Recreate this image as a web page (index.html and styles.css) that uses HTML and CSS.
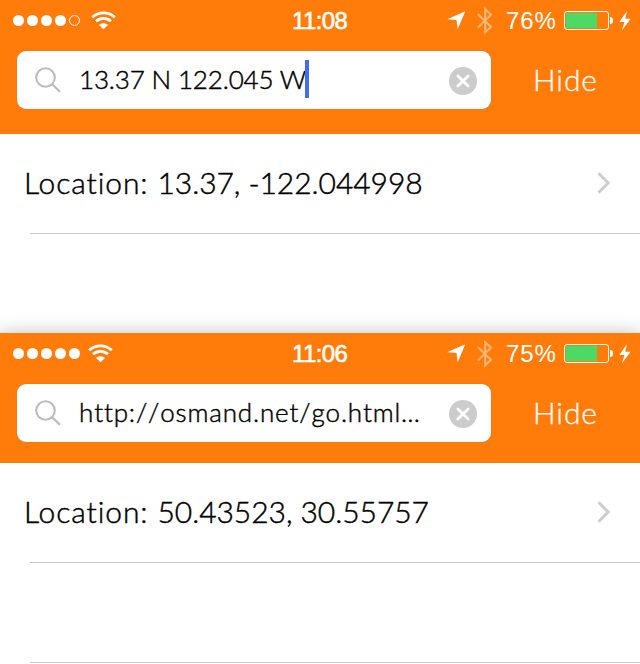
FILE: index.html
```
<!DOCTYPE html>
<html lang="en">
<head>
<meta charset="utf-8">
<title>Location search</title>
<link rel="stylesheet" href="styles.css">
</head>
<body>
<svg class="defs" width="0" height="0" aria-hidden="true">
  <symbol id="wifi" viewBox="0 0 25 19">
    <path d="M1.200 6.200C7.500 .3 17.500 .3 23.800 6.200M5 10.300c4.300-3.900 10.700-3.900 15 0" fill="none" stroke="#fff" stroke-width="2.700"/>
    <path d="M8 13.900c2.600-2.300 6.400-2.300 9 0L12.500 18.300z" fill="#fff"/>
  </symbol>
  <symbol id="arrow" viewBox="0 0 19 19"><path d="M18.300 .2L10.700 18.200L9.500 9.100L.2 8.200z" fill="#fff"/></symbol>
  <symbol id="bluetooth" viewBox="0 0 16 28"><path d="M1 7.200L14 19.800L8.200 25.300V2.200L14 7.800L1 20.600" fill="none" stroke="#ffb574" stroke-width="2.100"/></symbol>
  <symbol id="bolt" viewBox="0 0 12 20"><path d="M8 0L.3 11H5.500L2.800 19.600L11.700 7.800H6.300z" fill="#fff"/></symbol>
  <symbol id="search" viewBox="0 0 26 26"><circle cx="10.500" cy="10.500" r="9.300" fill="none" stroke="#bcbcbc" stroke-width="2.100"/><path d="M17.200 17.200L24.900 24.700" stroke="#bcbcbc" stroke-width="2.300"/></symbol>
  <symbol id="clear" viewBox="0 0 28 28"><circle cx="14" cy="14" r="14" fill="#ccc"/><path d="M8.900 8.900L19.100 19.100M19.100 8.900L8.900 19.100" stroke="#fff" stroke-width="2.800" stroke-linecap="round"/></symbol>
  <symbol id="chevron" viewBox="0 0 14 22"><path d="M1.500 1.200L11.200 11L1.500 20.800" fill="none" stroke="#cdcdcf" stroke-width="3"/></symbol>
</svg>

<section class="screen first">
  <header class="header">
    <div class="status">
      <div class="signal"><i></i><i></i><i></i><i></i><i class="off"></i></div>
      <svg class="wifi"><use href="#wifi"/></svg>
      <span class="time">11:08</span>
      <svg class="arrow"><use href="#arrow"/></svg>
      <svg class="bluetooth"><use href="#bluetooth"/></svg>
      <span class="percent">76%</span>
      <div class="battery"><b></b></div><div class="tip"></div>
      <svg class="bolt"><use href="#bolt"/></svg>
    </div>
    <div class="bar">
      <div class="field">
        <svg class="search"><use href="#search"/></svg>
        <span class="query coords">13.37 N 122.045 W</span><span class="caret"></span>
        <svg class="clear"><use href="#clear"/></svg>
      </div>
      <span class="hide">Hide</span>
    </div>
  </header>
  <div class="row"><span class="result"><span class="label">Location: </span>13.37, -122.044998</span><svg class="chevron"><use href="#chevron"/></svg></div>
</section>

<section class="screen second">
  <header class="header">
    <div class="status">
      <div class="signal"><i></i><i></i><i></i><i></i><i></i></div>
      <svg class="wifi"><use href="#wifi"/></svg>
      <span class="time">11:06</span>
      <svg class="arrow"><use href="#arrow"/></svg>
      <svg class="bluetooth"><use href="#bluetooth"/></svg>
      <span class="percent">75%</span>
      <div class="battery"><b></b></div><div class="tip"></div>
      <svg class="bolt"><use href="#bolt"/></svg>
    </div>
    <div class="bar">
      <div class="field">
        <svg class="search"><use href="#search"/></svg>
        <span class="query link">http://osmand.net/go.html<span class="dots">…</span></span>
        <svg class="clear"><use href="#clear"/></svg>
      </div>
      <span class="hide">Hide</span>
    </div>
  </header>
  <div class="row"><span class="result"><span class="label">Location: </span>50.43523, 30.55757</span><svg class="chevron"><use href="#chevron"/></svg></div>
  <div class="row"></div>
</section>
</body>
</html>
```
FILE: styles.css
```
* { box-sizing: border-box; }
body {
  margin: 0;
  width: 640px;
  height: 664px;
  overflow: hidden;
  background: #fff;
  color: #000;
  font-family: Lato, "Liberation Sans", sans-serif;
  font-weight: 300;
  font-variant-ligatures: none;
}
svg { display: block; flex: none; }
.defs { position: absolute; }
.first { height: 333px; }
.first .header { height: 134px; }
.second .header { height: 130px; box-shadow: 0 0 18px rgba(0, 0, 0, .24); clip-path: inset(-20px 0 0 0); }
.header { background: #ff7c0a; }

.status {
  display: grid;
  grid-template-columns: 78px 201px 155px 30px 29px 58px 45px 10px 12px;
  height: 41px;
  padding-left: 13px;
  align-items: center;
  color: #fff;
  white-space: nowrap;
}
.second .status { grid-template-columns: 75px 204px 155px 30px 29px 58px 45px 10px 12px; }
.signal { display: flex; gap: 3px; }
.signal i { width: 11px; height: 11px; border-radius: 50%; background: #fff; }
.signal .off { background: none; border: 1px solid #fff; }
.wifi { width: 25px; height: 19px; }
.time {
  font: 24px/28px "Liberation Sans", sans-serif;
  -webkit-text-stroke: .6px #fff;
  letter-spacing: -.6px;
  padding-top: 1px;
}
.arrow { width: 19px; height: 19px; }
.bluetooth { width: 16px; height: 28px; }
.percent { font: 24px/28px "Liberation Sans", sans-serif; letter-spacing: .9px; padding-top: 1px; }
.battery { width: 45px; height: 19px; border: 1px solid #fff; border-radius: 3px; padding: 1px; }
.battery b { display: block; width: 31px; height: 15px; background: #4cd964; }
.tip { width: 3px; height: 7px; margin-left: 1px; background: #fff; border-radius: 0 3px 3px 0; }
.bolt { width: 12px; height: 20px; }

.bar { display: flex; align-items: center; padding: 10px 0 0 17px; }
.field {
  display: flex;
  align-items: center;
  width: 474px;
  height: 58px;
  padding: 0 14px 0 18px;
  background: #fff;
  border-radius: 9px;
  box-shadow: 0 0 1px 0 #777;
}
.search { width: 26px; height: 26px; }
.query { margin: 0 0 2px 18px; font-size: 26px; line-height: 34px; white-space: nowrap; -webkit-text-stroke: .45px #000; }
.coords { width: 226px; letter-spacing: -.15px; }
.link { letter-spacing: .85px; font-kerning: none; }
.dots { letter-spacing: 0; }
.caret { width: 4px; height: 38px; margin-bottom: 2px; background: #446cf0; }
.clear { width: 28px; height: 28px; margin: 2px 0 0 auto; }
.hide { margin: 0 0 2px 42px; color: #fff; font-size: 30px; letter-spacing: .9px; line-height: 36px; -webkit-text-stroke: .3px #fff; }

.row {
  display: flex;
  justify-content: space-between;
  align-items: center;
  height: 100px;
  padding: 0 29px 2px 24px;
  background: linear-gradient(#c8c7cc, #c8c7cc) 30px 100% / 610px 1px no-repeat;
}
.result { margin-bottom: 2px; font-size: 30px; line-height: 36px; white-space: nowrap; letter-spacing: -.05px; -webkit-text-stroke: .45px #000; }
.label { letter-spacing: .9px; }
.chevron { width: 14px; height: 22px; }
```
